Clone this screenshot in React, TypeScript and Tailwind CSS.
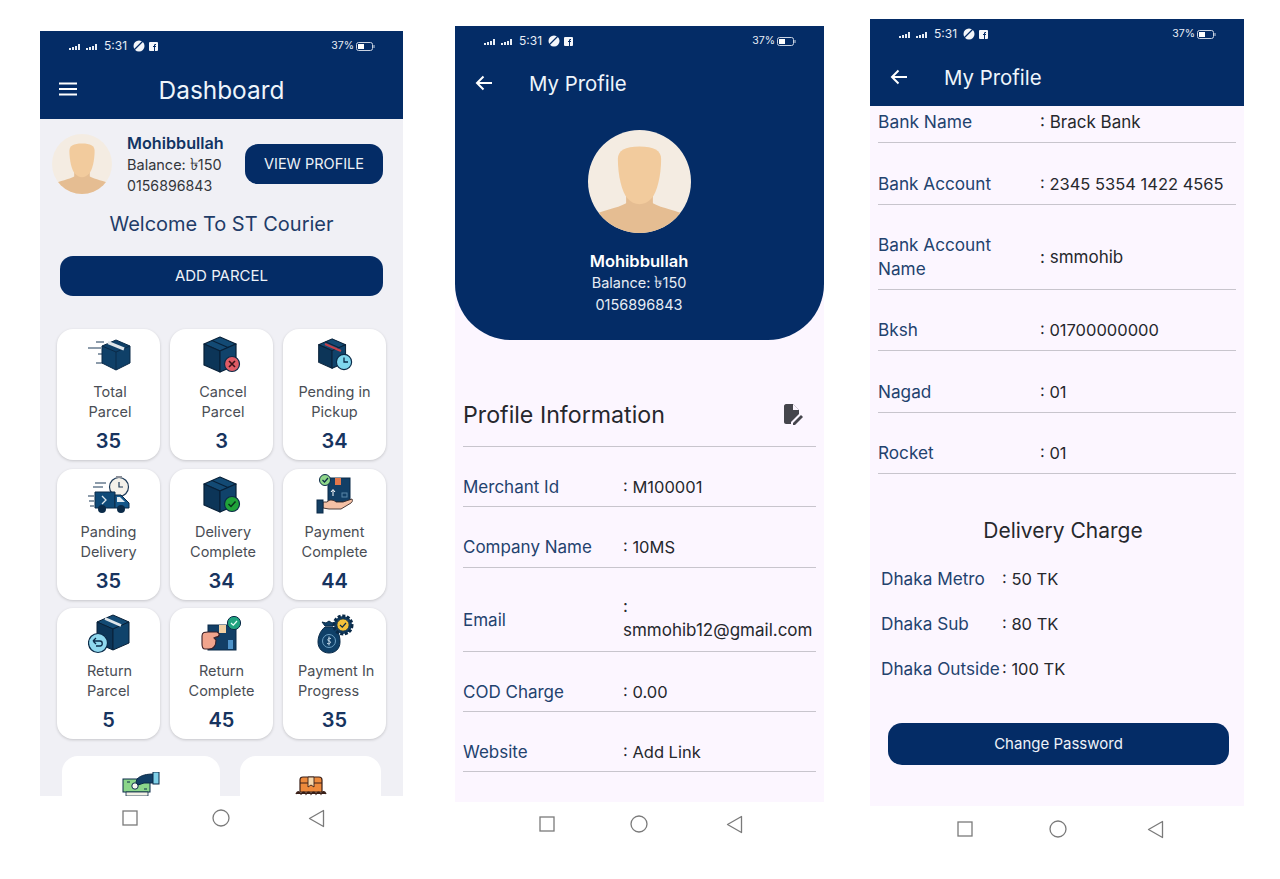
import type { ReactNode } from "react";

const box = { top: "#134a74", left: "#0c3558", right: "#10436b", line: "#082038" };

function Cube({ x = 0, y = 0, s = 1 }: { x?: number; y?: number; s?: number }) {
  return (
    <g transform={`translate(${x} ${y}) scale(${s})`} stroke={box.line} strokeWidth="1.2" strokeLinejoin="round">
      <path d="M18 1 34 8 18 15 2 8Z" fill={box.top} />
      <path d="M2 8 18 15V36L2 29Z" fill={box.left} />
      <path d="M34 8 18 15V36L34 29Z" fill={box.right} />
      <path d="M10 4.5 26 11.5" fill="none" />
    </g>
  );
}

function TotalIcon() {
  return (
    <svg width="44" height="32" viewBox="0 0 44 32">
      <path d="M1 9H14M9 3H17M11 15H16M9 24H16" stroke="#1d3a58" strokeWidth="1.2" />
      <path d="M29 1 43 7V24L29 31 15 24V7Z" fill="#0f4068" stroke="#0a2a48" />
      <path d="M15 7 29 13 43 7M29 13V31" fill="none" stroke="#0a2a48" />
      <path d="M21 3.5 37 10" stroke="#dfe5ea" strokeWidth="3" />
    </svg>
  );
}

function CancelIcon() {
  return (
    <svg width="40" height="38" viewBox="0 0 40 38">
      <Cube />
      <circle cx="30" cy="28" r="7.5" fill="#df5c66" stroke="#0a2a48" strokeWidth="1.2" />
      <path d="M27 25 33 31M33 25 27 31" stroke="#3a1218" strokeWidth="1.6" />
    </svg>
  );
}

function PendingIcon() {
  return (
    <svg width="36" height="34" viewBox="0 0 36 34">
      <Cube s={0.84} />
      <path d="M8 6 24 13" stroke="#c2404a" strokeWidth="2.2" />
      <circle cx="27" cy="24" r="7.6" fill="#7fd6ee" stroke="#0a2a48" strokeWidth="1.2" />
      <path d="M27 19.5V24H31" fill="none" stroke="#0a2a48" strokeWidth="1.3" />
    </svg>
  );
}

function TruckIcon() {
  return (
    <svg width="42" height="38" viewBox="0 0 42 38">
      <circle cx="31" cy="11" r="9.5" fill="#f4f1ea" stroke="#1d3a58" strokeWidth="1.2" />
      <rect x="28" y="0" width="6" height="2" fill="#8a8f98" />
      <path d="M31 6V11H35" fill="none" stroke="#1d3a58" strokeWidth="1.2" />
      <path d="M7 7H18M5 11H15M0 20H6M1 25H6M2 30H6" stroke="#1d3a58" strokeWidth="1.1" />
      <path d="M7 16H27V32H7Z" fill="#0f4a78" stroke="#0a2a48" />
      <path d="M27 19H33L41 27V32H27Z" fill="#14578a" stroke="#0a2a48" />
      <path d="M29 21H32L37 26H29Z" fill="#dfe9ef" />
      <path d="M14 20 18 24 14 28" fill="none" stroke="#dfe9ef" strokeWidth="1.3" />
      <circle cx="14" cy="33" r="4" fill="#0a2a48" />
      <circle cx="33" cy="33" r="4" fill="#0a2a48" />
    </svg>
  );
}

function DoneIcon() {
  return (
    <svg width="40" height="38" viewBox="0 0 40 38">
      <Cube />
      <circle cx="30" cy="28" r="7.5" fill="#20a33a" stroke="#0a2a48" strokeWidth="1.2" />
      <path d="M26.5 28 29 30.5 33.5 25.5" fill="none" stroke="#08301a" strokeWidth="1.5" />
    </svg>
  );
}

function PaymentDoneIcon() {
  return (
    <svg width="38" height="42" viewBox="0 0 38 42">
      <rect x="12" y="4" width="22" height="24" fill="#123f66" stroke="#0a2a48" />
      <rect x="19" y="4" width="6" height="7" fill="#e2774b" />
      <path d="M17 22V16M15 18 17 15.5 19 18" fill="none" stroke="#fff" strokeWidth="1" />
      <rect x="26" y="19" width="5" height="4" fill="none" stroke="#5a88a8" />
      <circle cx="9" cy="6" r="5.5" fill="#8fd68a" stroke="#0a2a48" />
      <path d="M6.5 6 8.5 8 12 4" fill="none" stroke="#0a2a48" strokeWidth="1.2" />
      <path d="M7 28H11C14 25 18 26 20 28H27L36 25C37 27 36 28 35 29L25 35H13L7 34Z" fill="#f5c1a6" stroke="#3a2a28" strokeWidth="0.9" />
      <rect x="1" y="26" width="6" height="13" fill="#143f63" stroke="#0a2a48" />
    </svg>
  );
}

function ReturnIcon() {
  return (
    <svg width="42" height="40" viewBox="0 0 42 40">
      <g transform="translate(7 0)">
        <path d="M18 1 34 8 18 15 2 8Z" fill={box.top} stroke={box.line} />
        <path d="M2 8 18 15V36L2 29Z" fill={box.left} stroke={box.line} />
        <path d="M34 8 18 15V36L34 29Z" fill={box.right} stroke={box.line} />
        <path d="M10 4.5 26 11.5" stroke="#dfe5ea" strokeWidth="2.6" />
      </g>
      <circle cx="10" cy="29" r="9.5" fill="#8fd8ee" stroke="#0a2a48" strokeWidth="1.2" />
      <path d="M5 27H12C15 27 15 32 12 32H8M5 27 8 24M5 27 8 30" fill="none" stroke="#0a2a48" strokeWidth="1.3" />
    </svg>
  );
}

function ReturnDoneIcon() {
  return (
    <svg width="42" height="36" viewBox="0 0 42 36">
      <rect x="7" y="9" width="28" height="25" fill="#123f66" stroke="#0a2a48" />
      <rect x="18" y="9" width="7" height="8" fill="#f1cfa2" />
      <rect x="27" y="24" width="5" height="9" fill="#4e93c9" />
      <path d="M1 20C1 16 4 16 7 16H16C19 17 19 21 15 21L13 22 15 24C15 30 12 33 8 33H4C1 33 1 30 1 28Z" fill="#f1a48d" stroke="#3a2028" strokeWidth="1.1" />
      <circle cx="33" cy="7" r="6.6" fill="#1fa37f" stroke="#0a2a48" />
      <path d="M30 7 32.3 9.2 36 5" fill="none" stroke="#e6fff6" strokeWidth="1.2" />
    </svg>
  );
}

function MoneyBagIcon() {
  return (
    <svg width="40" height="40" viewBox="0 0 40 40">
      <path d="M7 8 10 12H18L21 8 17 9 14 7 11 9Z" fill="#0f4068" stroke="#0a2a48" />
      <path d="M10 13H18C24 17 25 23 25 28 25 35 20 39 14 39 8 39 3 35 3 28 3 23 5 17 10 13Z" fill="#0f4068" stroke="#0a2a48" />
      <circle cx="14" cy="27" r="6.5" fill="none" stroke="#6fa3c6" />
      <path d="M16 24.5C13 23.5 11.5 26.5 14 27 17 27.6 15.5 30.5 12 29.5M14 22.5V31.5" fill="none" stroke="#cfe2ef" strokeWidth="0.9" />
      <circle cx="28" cy="11" r="9" fill="#123f66" stroke="#0a2a48" strokeWidth="3" strokeDasharray="3 1.6" />
      <circle cx="28" cy="11" r="6.2" fill="#f3c13a" stroke="#0a2a48" />
      <path d="M25 11 27.3 13.2 31 9" fill="none" stroke="#0a2a48" strokeWidth="1.2" />
    </svg>
  );
}

function CashIcon() {
  return (
    <svg width="38" height="32" viewBox="0 0 38 32">
      <rect x="1" y="7" width="27" height="13" fill="#8bd68a" stroke="#0a2a48" />
      <circle cx="13" cy="14" r="3.2" fill="#f7f7f0" stroke="#0a2a48" />
      <path d="M5 10H8M22 17H25" stroke="#0a2a48" />
      <path d="M15 7C19 3 25 2 32 2V11L22 11 16 13 14 10Z" fill="#123f66" stroke="#0a2a48" />
      <rect x="31" y="0" width="6" height="12" fill="#7fd0e8" stroke="#0a2a48" />
      <path d="M4 20H26V24H4Z" fill="#f2f0e4" stroke="#0a2a48" strokeWidth="0.8" />
      <path d="M6 24V28M13 24V28M20 24V28M25 24V28" stroke="#e09a3a" strokeWidth="2" />
    </svg>
  );
}

function CrateIcon() {
  return (
    <svg width="32" height="28" viewBox="0 0 32 28">
      <path d="M5 4C5 2 6 1 8 1H24C26 1 27 2 27 4V16H5Z" fill="#ee8a3c" stroke="#3a2018" strokeWidth="1.2" />
      <path d="M5 7H27" stroke="#3a2018" />
      <path d="M13 1H19V11L16 9 13 11Z" fill="#f6d9ae" stroke="#3a2018" strokeWidth="0.9" />
      <path d="M1 18C3 14 4 16 6 18 8 15 10 16 11 18 13 15 15 16 16 18 18 15 20 16 21 18 23 15 25 16 26 18 28 14 30 16 31 18" fill="#3a2018" stroke="#3a2018" strokeWidth="1.4" />
    </svg>
  );
}

function Avatar({ className }: { className: string }) {
  return (
    <svg viewBox="0 0 100 100" className={`${className} shrink-0`}>
      <defs>
        <clipPath id="avatar-clip">
          <circle cx="50" cy="50" r="50" />
        </clipPath>
      </defs>
      <g clipPath="url(#avatar-clip)">
        <rect width="100" height="100" fill="#f4ece2" />
        <path d="M0 100V84C14 78 28 76 37 71V60H63V71C72 76 86 78 100 84V100Z" fill="#e5bd92" />
        <path d="M29 28C29 20 36 16 50 16 64 16 71 20 71 28 71 45 67 60 62 66 55 74 45 74 38 66 33 60 29 45 29 28Z" fill="#f2cb9d" />
      </g>
    </svg>
  );
}

function StatusBar() {
  return (
    <div className="flex h-[23px] items-end pr-[28px] pl-[29px] text-white">
      <svg width="32" height="6" viewBox="0 0 32 6" fill="#e8eef6" className="mb-[4px]">
        <rect x="0" y="4" width="2" height="2" />
        <rect x="3" y="3" width="2" height="3" />
        <rect x="6" y="2" width="2" height="4" />
        <rect x="9" y="0" width="2" height="6" />
        <rect x="17" y="4" width="2" height="2" />
        <rect x="20" y="3" width="2" height="3" />
        <rect x="23" y="2" width="2" height="4" />
        <rect x="26" y="0" width="2" height="6" />
      </svg>
      <span className="ml-[3px] text-[12px] leading-[16px] text-[#e8eef6]">5:31</span>
      <svg width="12" height="12" viewBox="0 0 12 12" className="mb-[2px] ml-[6px]">
        <circle cx="6" cy="6" r="5.5" fill="#f4f6fa" />
        <path d="M1 10 10 1" stroke="#042c66" strokeWidth="1.2" />
      </svg>
      <svg width="9" height="9" viewBox="0 0 9 9" className="mb-[3px] ml-[4px]">
        <rect width="9" height="9" rx="1" fill="#f4f6fa" />
        <path d="M5 9V5H4V4H5V3C5 2 6 2 7 2V3C6 3 6 3 6 4H7V5H6V9Z" fill="#042c66" />
      </svg>
      <span className="ml-auto text-[10.5px] leading-[16px] text-[#e8eef6]">37%</span>
      <svg width="19" height="9" viewBox="0 0 19 9" className="mb-[3px] ml-[2px]">
        <rect x="0.5" y="0.5" width="16" height="8" rx="2" fill="none" stroke="#c9d3e2" />
        <rect x="2" y="2" width="6" height="5" fill="#fff" />
        <rect x="17.5" y="3" width="1" height="3" fill="#c9d3e2" />
      </svg>
    </div>
  );
}

function BackArrow() {
  return (
    <svg width="18" height="16" viewBox="0 0 18 16" fill="none" stroke="#fff" strokeWidth="2" className="mb-[2px]">
      <path d="M17 8H2M8.5 1.5 2 8l6.5 6.5" />
    </svg>
  );
}

function NavBar({ height, pads }: { height: string; pads: string[] }) {
  return (
    <div className={`flex items-center bg-white ${height}`}>
      <svg width="16" height="16" viewBox="0 0 16 16" className={pads[0]}>
        <rect x="1" y="1" width="14" height="14" fill="none" stroke="#7a7a7a" strokeWidth="1.3" />
      </svg>
      <svg width="18" height="18" viewBox="0 0 18 18" className={pads[1]}>
        <circle cx="9" cy="9" r="8" fill="none" stroke="#7a7a7a" strokeWidth="1.3" />
      </svg>
      <svg width="17" height="19" viewBox="0 0 17 19" className={pads[2]}>
        <path d="M15.5 1.5V17.5L1.5 9.5Z" fill="none" stroke="#7a7a7a" strokeWidth="1.3" strokeLinejoin="round" />
      </svg>
    </div>
  );
}

function Card({ icon, label, value, labelClass = "" }: { icon: ReactNode; label: ReactNode; value: string; labelClass?: string }) {
  return (
    <div className="h-[131px] rounded-[16px] bg-white pt-[1px] shadow-[0_1px_3px_rgba(0,0,0,0.18)]">
      <div className="mb-[2px] flex h-[50px] items-center justify-center">{icon}</div>
      <div className={`text-center text-[14.5px] leading-[20px] text-[#4a4e55] ${labelClass}`}>{label}</div>
      <div className="mt-[6px] text-center text-[20px] leading-[26px] font-semibold text-[#17345f]">{value}</div>
    </div>
  );
}

function InfoRow({ label, value, className, labelWidth, labelSize = "text-[17px]", valueSize = "text-[16.5px]", bottom = "pb-[8px]" }: { label: ReactNode; value: ReactNode; className: string; labelWidth: string; labelSize?: string; valueSize?: string; bottom?: string }) {
  return (
    <div className={`flex items-end border-b border-[#c8c5cd] leading-[24px] ${bottom} ${className}`}>
      <div className={`shrink-0 text-[#23426e] ${labelSize} ${labelWidth}`}>{label}</div>
      <div className={`text-[#26282d] ${valueSize}`}>{value}</div>
    </div>
  );
}

function ChargeRow({ label, value, className }: { label: string; value: string; className: string }) {
  return (
    <div className={`flex pl-[3px] leading-[24px] ${className}`}>
      <div className="w-[121px] shrink-0 text-[17.2px] whitespace-nowrap text-[#23426e]">{label}</div>
      <div className="text-[16.5px] whitespace-nowrap text-[#26282d]">: {value}</div>
    </div>
  );
}

export default function App() {
  return (
    <div className="flex h-[879px] items-start overflow-hidden bg-white pl-[40px] font-['Inter','Noto_Sans','DejaVu_Sans',sans-serif]">
      {/* dashboard */}
      <div className="mt-[31px] w-[363px] shrink-0">
        <header className="h-[88px] bg-[#042c66]">
          <StatusBar />
          <div className="relative mt-[8px] flex h-[57px] items-center justify-center">
            <svg width="20" height="14" viewBox="0 0 20 14" className="absolute top-[20px] left-[18px]" stroke="#fff" strokeWidth="2">
              <path d="M1 1.5H19M1 7H19M1 12.5H19" />
            </svg>
            <h1 className="text-[24.4px] font-normal text-[#eef5fb]">Dashboard</h1>
          </div>
        </header>
        <main className="h-[677px] overflow-hidden bg-[#f0f0f5]">
          <div className="flex items-center pt-[13px] pl-[12px]">
            <Avatar className="h-[60px] w-[60px]" />
            <div className="ml-[15px] w-[118px] translate-y-[1px]">
              <div className="text-[16.2px] leading-[21px] font-semibold text-[#123463]">Mohibbullah</div>
              <div className="text-[14.5px] leading-[21px] text-[#33363b]">Balance: <span className="text-[17px] leading-[16px]">৳</span>150</div>
              <div className="text-[14.2px] leading-[21px] text-[#33363b]">0156896843</div>
            </div>
            <button className="h-[40px] w-[138px] rounded-[13px] bg-[#042c66] text-[14.5px] text-[#eef2f8]">VIEW PROFILE</button>
          </div>
          <div className="mt-[15px] text-center text-[20px] leading-[28px] text-[#1f3c68]">Welcome To ST Courier</div>
          <div className="mt-[18px] px-[20px]">
            <button className="h-[40px] w-full rounded-[13px] bg-[#042c66] text-[15px] text-[#eef2f8]">ADD PARCEL</button>
          </div>
          <div className="mt-[33px] grid grid-cols-[103px_103px_103px] gap-x-[10px] gap-y-[8.5px] pl-[17px]">
            <Card icon={<TotalIcon />} label={<>Total<br />Parcel</>} value="35" labelClass="pl-[3px]" />
            <Card icon={<CancelIcon />} label={<>Cancel<br />Parcel</>} value="3" labelClass="pl-[3px]" />
            <Card icon={<PendingIcon />} label={<>Pending in<br />Pickup</>} value="34" />
            <Card icon={<TruckIcon />} label={<>Panding<br />Delivery</>} value="35" />
            <Card icon={<DoneIcon />} label={<>Delivery<br />Complete</>} value="34" labelClass="pl-[3px]" />
            <Card icon={<PaymentDoneIcon />} label={<>Payment<br />Complete</>} value="44" />
            <Card icon={<ReturnIcon />} label={<>Return<br />Parcel</>} value="5" labelClass="pl-[30px] text-left" />
            <Card icon={<ReturnDoneIcon />} label={<>Return<br />Complete</>} value="45" />
            <Card icon={<MoneyBagIcon />} label={<>Payment In<br />Progress</>} value="35" labelClass="pl-[15px] text-left" />
          </div>
          <div className="mt-[17px] flex pl-[22px]">
            <div className="flex h-[80px] w-[158px] justify-center rounded-t-[16px] bg-white pt-[16px]"><CashIcon /></div>
            <div className="ml-[20px] flex h-[80px] w-[141px] justify-center rounded-t-[16px] bg-white pt-[20px]"><CrateIcon /></div>
          </div>
        </main>
        <NavBar height="h-[44px]" pads={["ml-[82px]", "ml-[74px]", "ml-[78px]"]} />
      </div>

      {/* profile, first part */}
      <div className="mt-[26px] ml-[52px] w-[369px] shrink-0">
        <div className="bg-[#fcf6ff]">
          <header className="h-[314px] rounded-b-[56px] bg-[#042c66]">
            <StatusBar />
            <div className="mt-[6px] flex h-[58px] items-center pl-[20px]">
              <BackArrow />
              <h1 className="ml-[36px] text-[20.4px] font-normal text-[#eef5fb]">My Profile</h1>
            </div>
            <div className="mt-[17px] flex justify-center pr-[1px]">
              <Avatar className="h-[103px] w-[103px]" />
            </div>
            <div className="mt-[17px] pr-[1px] text-center text-[14.5px] leading-[22px] text-[#e7edf5]">
              <div className="text-[16.5px] font-semibold text-white">Mohibbullah</div>
              <div>Balance: <span className="text-[17px] leading-[16px]">৳</span>150</div>
              <div>0156896843</div>
            </div>
          </header>
          <div className="h-[462px] px-[8px]">
            <div className="flex h-[107px] items-end justify-between border-b border-[#c8c5cd] pb-[13px]">
              <h2 className="text-[23.2px] leading-[36px] font-normal text-[#26282d]">Profile Information</h2>
              <svg width="22" height="22" viewBox="0 0 22 22" className="mr-[12px] mb-[7px]">
                <path d="M2 2C2 1 3 0 4 0H11L17 6V10L9 18V20H4C3 20 2 19 2 18Z" fill="#45454c" />
                <path d="M11 0V6H17Z" fill="#fcf6ff" />
                <path d="M11 19V21H13L21 13 19 11Z" fill="#45454c" />
              </svg>
            </div>
            <InfoRow className="h-[60px]" bottom="pb-[7px]" labelWidth="w-[160px]" label="Merchant Id" value=": M100001" />
            <InfoRow className="h-[61px]" labelWidth="w-[160px]" label="Company Name" value=": 10MS" />
            <div className="flex h-[84px] items-center border-b border-[#c8c5cd] pt-[16px] leading-[24px]">
              <div className="w-[160px] shrink-0 pt-[4px] text-[17px] text-[#23426e]">Email</div>
              <div className="text-[17px] text-[#26282d]">:<br />smmohib12@gmail.com</div>
            </div>
            <InfoRow className="h-[60px]" bottom="pb-[7px]" labelWidth="w-[160px]" label="COD Charge" value=": 0.00" />
            <InfoRow className="h-[60px]" bottom="pb-[7px]" labelWidth="w-[160px]" label="Website" value=": Add Link" />
          </div>
        </div>
        <NavBar height="h-[44px]" pads={["ml-[84px]", "ml-[75px]", "ml-[78px]"]} />
      </div>

      {/* profile, second part */}
      <div className="mt-[19px] ml-[46px] w-[374px] shrink-0">
        <header className="h-[87px] bg-[#042c66]">
          <StatusBar />
          <div className="mt-[8px] flex h-[56px] items-center pl-[20px]">
            <BackArrow />
            <h1 className="ml-[36px] text-[20.4px] font-normal text-[#eef5fb]">My Profile</h1>
          </div>
        </header>
        <div className="h-[700px] bg-[#fcf6ff] px-[8px]">
          <InfoRow className="h-[37px]" labelWidth="w-[162px]" labelSize="text-[17.4px]" valueSize="text-[17px]" label="Bank Name" value=": Brack Bank" />
          <InfoRow className="h-[62px]" labelWidth="w-[162px]" labelSize="text-[17.2px]" label="Bank Account" value=": 2345 5354 1422 4565" />
          <div className="flex h-[85px] items-center border-b border-[#c8c5cd] pt-[20px] leading-[24px]">
            <div className="w-[162px] shrink-0 text-[17.2px] text-[#23426e]">Bank Account<br />Name</div>
            <div className="text-[17px] text-[#26282d]">: smmohib</div>
          </div>
          <InfoRow className="h-[61px]" labelWidth="w-[162px]" labelSize="text-[17.2px]" label="Bksh" value=": 01700000000" />
          <InfoRow className="h-[62px]" labelWidth="w-[162px]" labelSize="text-[17.2px]" label="Nagad" value=": 01" />
          <InfoRow className="h-[61px]" labelWidth="w-[162px]" labelSize="text-[17.2px]" label="Rocket" value=": 01" />
          <h2 className="mt-[42px] pl-[12px] text-center text-[21px] leading-[30px] font-normal text-[#26282d]">Delivery Charge</h2>
          <ChargeRow className="mt-[21px]" label="Dhaka Metro" value="50 TK" />
          <ChargeRow className="mt-[21px]" label="Dhaka Sub" value="80 TK" />
          <ChargeRow className="mt-[21px]" label="Dhaka Outside" value="100 TK" />
          <div className="mt-[42px] pr-[7px] pl-[10px]">
            <button className="h-[42px] w-full rounded-[14px] bg-[#042c66] text-[15px] text-[#eef2f8]">Change Password</button>
          </div>
        </div>
        <NavBar height="h-[46px]" pads={["ml-[87px]", "ml-[76px]", "ml-[80px]"]} />
      </div>
    </div>
  );
}
